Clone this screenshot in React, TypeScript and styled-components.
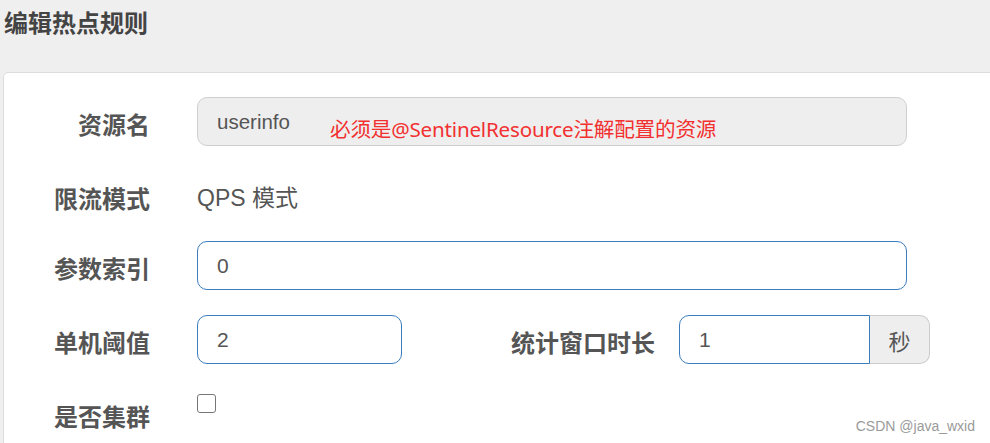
import React from "react";
import styled, { createGlobalStyle } from "styled-components";

const Global = createGlobalStyle`
  html, body { margin: 0; padding: 0; }
  body {
    background: #efefef;
    font-family: "Liberation Sans", "Noto Sans CJK SC", sans-serif;
    overflow: hidden;
  }
`;

const Page = styled.div`
  position: relative;
  width: 990px;
  height: 443px;
  overflow: hidden;
`;

const Header = styled.h3`
  margin: 0;
  height: 72px;
  padding-left: 4px;
  font-size: 24px;
  line-height: 44px;
  font-weight: 700;
  color: #444;
  font-family: "Noto Sans CJK SC", sans-serif;
`;

const Panel = styled.div`
  margin-left: 3px;
  margin-right: -20px;
  background: #fff;
  border: 1px solid #dcdcdc;
  border-top-left-radius: 5px;
  padding-top: 24px;
  min-height: 420px;
`;

const Row = styled.div<{ $h: number }>`
  display: flex;
  align-items: flex-start;
  min-height: ${(p) => p.$h}px;
  margin-bottom: 25px;
`;

const Label = styled.label<{ $w?: number; $gap?: number }>`
  flex: none;
  width: ${(p) => p.$w ?? 146}px;
  margin-right: ${(p) => p.$gap ?? 47}px;
  text-align: right;
  padding-top: 13px;
  font-family: "Noto Sans CJK SC", sans-serif;
  font-size: 24px;
  line-height: 28px;
  font-weight: 700;
  color: #555;
`;

const StaticText = styled.div`
  padding-top: 13px;
  font-size: 23px;
  line-height: 28px;
  color: #555;
`;

const ReadonlyBox = styled.div`
  box-sizing: border-box;
  width: 710px;
  height: 49px;
  display: flex;
  align-items: center;
  padding-left: 19px;
  background: #eee;
  border: 1px solid #cfcfcf;
  border-radius: 10px;
`;

const BoxValue = styled.span`
  width: 113px;
  font-size: 20.5px;
  color: #555;
`;

const Hint = styled.span`
  padding-top: 15px;
  font-family: "Noto Sans", "Noto Sans CJK SC", sans-serif;
  font-size: 20.6px;
  line-height: 20px;
  color: #f23030;
  letter-spacing: -0.2px;
`;

const TextInput = styled.input<{ $w: number }>`
  box-sizing: border-box;
  width: ${(p) => p.$w}px;
  height: 49px;
  padding: 0 19px;
  font-family: "Liberation Sans", "Noto Sans CJK SC", sans-serif;
  font-size: 21px;
  color: #555;
  background: #fff;
  border: 1px solid #3b7cbd;
  border-radius: 10px;
  outline: none;
`;

const Group = styled.div`
  display: flex;
  height: 49px;
`;

const GroupInput = styled(TextInput)`
  border-radius: 10px 0 0 10px;
`;

const Addon = styled.span`
  box-sizing: border-box;
  width: 60px;
  height: 49px;
  display: flex;
  align-items: center;
  justify-content: center;
  background: #eee;
  border: 1px solid #ccc;
  border-left: none;
  border-radius: 0 10px 10px 0;
  font-family: "Noto Sans CJK SC", sans-serif;
  font-size: 22px;
  color: #555;
`;

const Check = styled.input`
  appearance: none;
  margin: 5px 0 0;
  width: 19px;
  height: 19px;
  border: 1.5px solid #767676;
  border-radius: 3px;
  background: #fff;
`;

const Watermark = styled.div`
  position: absolute;
  right: 15px;
  bottom: 9px;
  font-size: 14px;
  color: #9a9a9a;
`;

export default function App() {
  return (
    <Page>
      <Global />
      <Header>编辑热点规则</Header>
      <Panel>
        <Row $h={49}>
          <Label>资源名</Label>
          <ReadonlyBox>
            <BoxValue>userinfo</BoxValue>
            <Hint>必须是@SentinelResource注解配置的资源</Hint>
          </ReadonlyBox>
        </Row>
        <Row $h={45}>
          <Label>限流模式</Label>
          <StaticText>QPS 模式</StaticText>
        </Row>
        <Row $h={49}>
          <Label>参数索引</Label>
          <TextInput $w={710} defaultValue="0" />
        </Row>
        <Row $h={49}>
          <Label>单机阈值</Label>
          <TextInput $w={205} defaultValue="2" />
          <Label $w={253} $gap={24}>统计窗口时长</Label>
          <Group>
            <GroupInput $w={191} defaultValue="1" />
            <Addon>秒</Addon>
          </Group>
        </Row>
        <Row $h={49}>
          <Label>是否集群</Label>
          <Check type="checkbox" />
        </Row>
      </Panel>
      <Watermark>CSDN @java_wxid</Watermark>
    </Page>
  );
}
